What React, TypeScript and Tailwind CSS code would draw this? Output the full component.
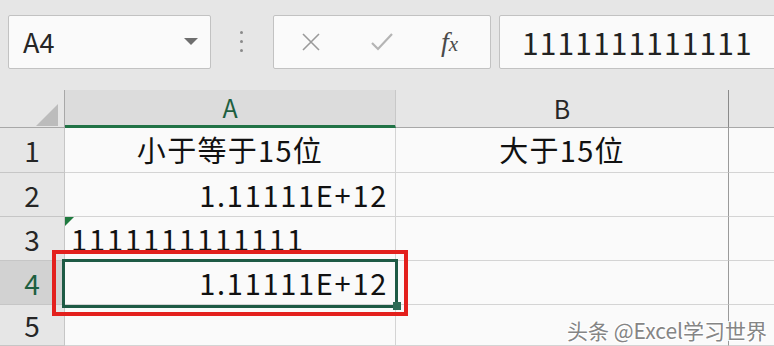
import React from "react";

const cjk = { fontFamily: '"Noto Sans CJK SC", "Noto Sans", sans-serif' };

const rows = [
  { n: "1", a: "小于等于15位", aAlign: "center", b: "大于15位", h: "h-[45px]" },
  { n: "2", a: "1.11111E+12", aAlign: "right", b: "", h: "h-[44px]" },
  { n: "3", a: "1111111111111", aAlign: "left", b: "", h: "h-[44px]", flag: true },
  { n: "4", a: "1.11111E+12", aAlign: "right", b: "", h: "h-[44px]", active: true },
  { n: "5", a: "", aAlign: "left", b: "", h: "h-[41px]" },
];

function FormulaBar() {
  return (
    <div className="relative h-[90px] bg-[#e6e6e6]">
      <div className="absolute left-[8px] top-[15px] flex h-[54px] w-[203px] items-center justify-between rounded-[2px] border border-[#c2c2c2] bg-[#fafafa] pl-[14px] pr-[12px]">
        <span className="text-[27px] text-[#262626]" style={cjk}>A4</span>
        <svg width="14" height="8" viewBox="0 0 14 8"><path d="M0 0h14L7 7z" fill="#6e6e6e" /></svg>
      </div>
      <div className="absolute left-[240px] top-[31px] flex flex-col gap-[6px]">
        <span className="block h-[3px] w-[3px] rounded-full bg-[#8a8a8a]" />
        <span className="block h-[3px] w-[3px] rounded-full bg-[#8a8a8a]" />
        <span className="block h-[3px] w-[3px] rounded-full bg-[#8a8a8a]" />
      </div>
      <div className="absolute left-[273px] top-[15px] flex h-[54px] w-[218px] items-center rounded-[2px] border border-[#c2c2c2] bg-[#fafafa]">
        <svg className="absolute left-[27px] top-[16px]" width="20" height="20" viewBox="0 0 20 20">
          <path d="M2 2L18 18M18 2L2 18" stroke="#9a9a9a" strokeWidth="1.6" fill="none" />
        </svg>
        <svg className="absolute left-[96px] top-[16px]" width="24" height="20" viewBox="0 0 24 20">
          <path d="M2 11L8 17L22 2" stroke="#b4b4b4" strokeWidth="2.2" fill="none" />
        </svg>
        <span className="absolute left-[167px] top-[5px] text-[28px] italic text-[#4a4a4a]" style={{ fontFamily: '"Liberation Serif", serif' }}>
          f<span className="text-[21px]">x</span>
        </span>
      </div>
      <div className="absolute left-[499px] top-[15px] flex h-[54px] w-[290px] items-center rounded-l-[2px] border border-[#c2c2c2] bg-[#fafafa] pl-[22px]">
        <span className="text-[30px] tracking-[1.1px] text-[#222]" style={cjk}>1111111111111</span>
      </div>
    </div>
  );
}

export default function App() {
  return (
    <div className="relative h-[346px] w-[774px] overflow-hidden bg-[#fafafa]" style={cjk}>
      <FormulaBar />
      <div className="grid grid-cols-[65px_331px_333px_1fr]">
        <div className="relative h-[38px] border-b border-r border-[#a8a8a8] bg-[#e6e6e6]">
          <svg className="absolute left-[36px] top-[14px]" width="22" height="22" viewBox="0 0 22 22"><path d="M22 0V22H0z" fill="#bcbcbc" /></svg>
        </div>
        <div className="flex h-[38px] items-center justify-center border-b-[3px] border-r border-b-[#217346] border-r-[#c8c8c8] bg-[#dcdcdc] text-[25px] text-[#1e5f40]">A</div>
        <div className="flex h-[38px] items-center justify-center border-b border-r border-b-[#a8a8a8] border-r-[#8a8a8a] bg-[#e6e6e6] text-[25px] text-[#262626]">B</div>
        <div className="h-[38px] border-b border-[#a8a8a8] bg-[#e6e6e6]" />
        {rows.map((r) => (
          <React.Fragment key={r.n}>
            <div className={`${r.h} flex items-center justify-center border-b border-r border-[#c6c6c6] ${r.active ? "bg-[#d2d2d2] text-[#1e5f40]" : "bg-[#e6e6e6] text-[#262626]"} text-[28px]`}>{r.n}</div>
            <div className={`${r.h} relative flex items-center border-b border-r border-[#d4d4d4] text-[29px] text-[#111] ${r.aAlign === "center" ? "justify-center tracking-[1.3px]" : r.aAlign === "right" ? "justify-end pr-[7px] tracking-[1.7px]" : "justify-start pl-[6px] tracking-[1.9px]"}`}>
              {r.flag && <svg className="absolute left-0 top-0" width="9" height="9" viewBox="0 0 9 9"><path d="M0 0H9L0 9z" fill="#1f7a3f" /></svg>}
              <span className="whitespace-nowrap">{r.a}</span>
            </div>
            <div className={`${r.h} flex items-center justify-center border-b border-r border-b-[#d4d4d4] border-r-[#9a9a9a] text-[29px] tracking-[1.3px] text-[#111]`}>{r.b}</div>
            <div className={`${r.h} border-b border-[#d4d4d4]`} />
          </React.Fragment>
        ))}
      </div>
      <div className="absolute left-[62px] top-[259px] h-[49px] w-[336px] border-[3px] border-[#1e5a45]" />
      <div className="absolute left-[393px] top-[302px] h-[8px] w-[8px] bg-[#2e6b55]" />
      <div className="absolute left-[52px] top-[250px] h-[66px] w-[356px] border-[4px] border-[#e3201d]" />
      <div
        className="absolute left-[567px] top-[315px] whitespace-nowrap text-[21px] text-[#858585]"
        style={{ textShadow: "1px 1px 0 #fff, -1px -1px 0 #fff, 1px -1px 0 #fff, -1px 1px 0 #fff" }}
      >
        头条 @Excel学习世界
      </div>
    </div>
  );
}
